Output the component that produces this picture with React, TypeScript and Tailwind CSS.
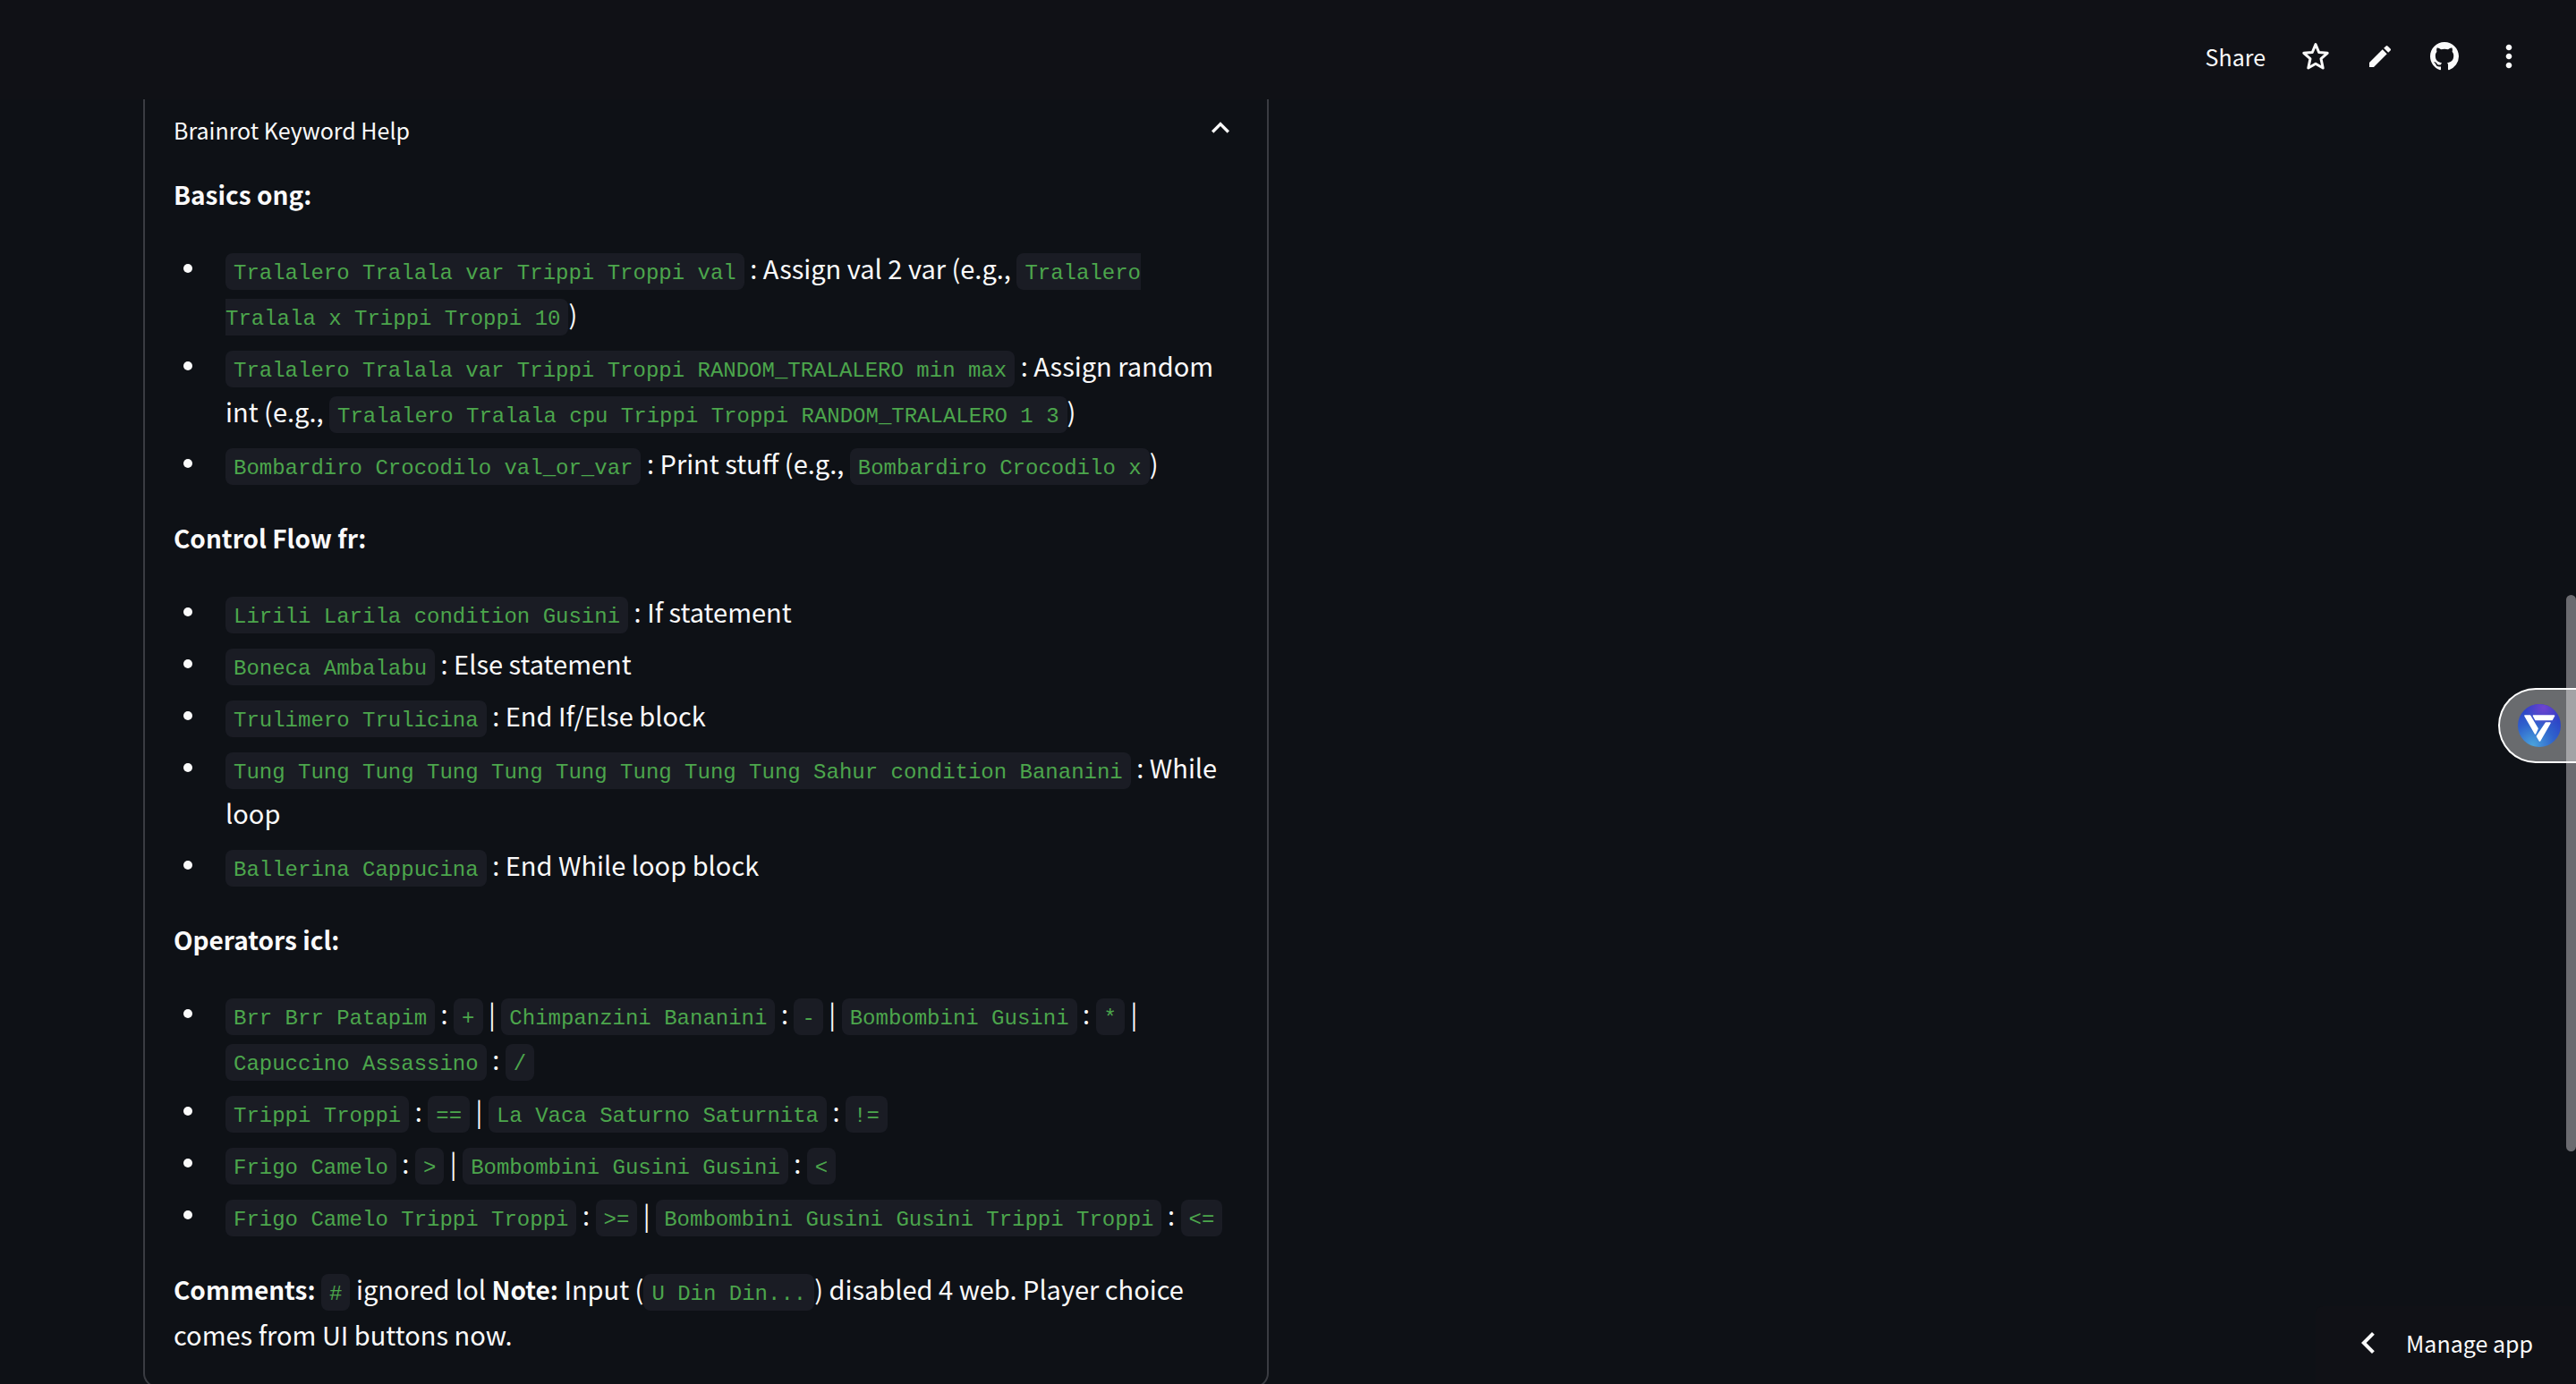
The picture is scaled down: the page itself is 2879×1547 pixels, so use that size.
import React from "react";
import { BsGithub } from "react-icons/bs";
import {
  MdChevronLeft,
  MdEdit,
  MdExpandLess,
  MdMoreVert,
} from "react-icons/md";

type ChildrenProps = {
  children: React.ReactNode;
};

function Code({ children }: ChildrenProps) {
  return (
    <code className="rounded-lg bg-[#1a1c24] px-[9px] pt-[9px] pb-[5px] font-['Liberation_Mono',monospace] text-[24px] leading-none text-[#4ca64c]">
      {children}
    </code>
  );
}

function Strong({ children }: ChildrenProps) {
  return <strong className="text-[28px] leading-none">{children}</strong>;
}

function Section({ title, children }: ChildrenProps & { title: string }) {
  return (
    <>
      <p>
        <Strong>{title}</Strong>
      </p>
      <ul className="flex flex-col gap-[7px] pl-[58px]">{children}</ul>
    </>
  );
}

function Item({ children }: ChildrenProps) {
  return (
    <li className="relative before:absolute before:-left-[47px] before:top-[21px] before:size-[10px] before:rounded-full before:bg-[#fafafa]">
      {children}
    </li>
  );
}

function StarIcon() {
  return (
    <svg
      viewBox="0 0 32 32"
      className="size-8"
      fill="none"
      stroke="currentColor"
      strokeWidth="3"
      strokeLinejoin="round"
    >
      <path d="M16 2.600l3.700 8.900 9.500.8-7.200 6.300 2.200 10.400-8.200-4.700-8.200 4.700 2.200-10.400-7.200-6.300 9.500-.8z" />
    </svg>
  );
}

function Toolbar() {
  return (
    <header className="flex h-[111px] shrink-0 items-center justify-end bg-[#101116] pr-[55px] pt-[15px]">
      <button className="mr-9 text-[25px] leading-8">Share</button>
      <div className="flex items-center gap-8">
        <button aria-label="Favorite" className="flex size-10 items-center justify-center">
          <StarIcon />
        </button>
        <button aria-label="Edit" className="flex size-10 items-center justify-center">
          <MdEdit className="size-8" />
        </button>
        <button aria-label="View source" className="flex size-10 items-center justify-center">
          <BsGithub className="size-8" />
        </button>
        <button aria-label="More" className="flex size-10 items-center justify-center">
          <MdMoreVert className="size-10" />
        </button>
      </div>
    </header>
  );
}

function KeywordHelp() {
  return (
    <section className="rounded-b-2xl border-x-2 border-b-2 border-[#3a3c42] px-8 pb-8">
      <button className="flex w-full items-start justify-between pt-3 text-[25px] leading-[44px]">
        Brainrot Keyword Help
        <MdExpandLess className="size-10" />
      </button>
      <div className="mt-6 flex flex-col gap-8 text-[29px] leading-[51px]">
        <Section title="Basics ong:">
          <Item>
            <Code>Tralalero Tralala var Trippi Troppi val</Code> : Assign val 2
            var (e.g., <Code>Tralalero Tralala x Trippi Troppi 10</Code>)
          </Item>
          <Item>
            <Code>Tralalero Tralala var Trippi Troppi RANDOM_TRALALERO min max</Code>{" "}
            : Assign random int (e.g.,{" "}
            <Code>Tralalero Tralala cpu Trippi Troppi RANDOM_TRALALERO 1 3</Code>)
          </Item>
          <Item>
            <Code>Bombardiro Crocodilo val_or_var</Code> : Print stuff (e.g.,{" "}
            <Code>Bombardiro Crocodilo x</Code>)
          </Item>
        </Section>
        <Section title="Control Flow fr:">
          <Item>
            <Code>Lirili Larila condition Gusini</Code> : If statement
          </Item>
          <Item>
            <Code>Boneca Ambalabu</Code> : Else statement
          </Item>
          <Item>
            <Code>Trulimero Trulicina</Code> : End If/Else block
          </Item>
          <Item>
            <Code>
              Tung Tung Tung Tung Tung Tung Tung Tung Tung Sahur condition Bananini
            </Code>{" "}
            : While loop
          </Item>
          <Item>
            <Code>Ballerina Cappucina</Code> : End While loop block
          </Item>
        </Section>
        <Section title="Operators icl:">
          <Item>
            <Code>Brr Brr Patapim</Code> : <Code>+</Code> |{" "}
            <Code>Chimpanzini Bananini</Code> : <Code>-</Code> |{" "}
            <Code>Bombombini Gusini</Code> : <Code>*</Code> |{" "}
            <Code>Capuccino Assassino</Code> : <Code>/</Code>
          </Item>
          <Item>
            <Code>Trippi Troppi</Code> : <Code>==</Code> |{" "}
            <Code>La Vaca Saturno Saturnita</Code> : <Code>!=</Code>
          </Item>
          <Item>
            <Code>Frigo Camelo</Code> : <Code>&gt;</Code> |{" "}
            <Code>Bombombini Gusini Gusini</Code> : <Code>&lt;</Code>
          </Item>
          <Item>
            <Code>Frigo Camelo Trippi Troppi</Code> : <Code>&gt;=</Code> |{" "}
            <Code>Bombombini Gusini Gusini Trippi Troppi</Code> :{" "}
            <Code>&lt;=</Code>
          </Item>
        </Section>
        <p>
          <Strong>Comments:</Strong> <Code>#</Code> ignored lol{" "}
          <Strong>Note:</Strong> Input (<Code>U Din Din...</Code>) disabled 4
          web. Player choice comes from UI buttons now.
        </p>
      </div>
    </section>
  );
}

function ExtensionTab() {
  return (
    <button
      aria-label="Open assistant"
      className="absolute right-0 top-[769px] flex h-[84px] w-[87px] items-center rounded-l-full border-2 border-r-0 border-white bg-white/38 pl-5"
    >
      <svg viewBox="0 0 48 48" className="size-12">
        <defs>
          <radialGradient id="orb" cx="0.35" cy="0.95" r="1">
            <stop offset="0" stopColor="#4aa3dc" />
            <stop offset="0.5" stopColor="#2f62cc" />
            <stop offset="1" stopColor="#2c35c4" />
          </radialGradient>
          <radialGradient id="glow" cx="0.6" cy="0.08" r="0.45">
            <stop offset="0" stopColor="#7044d0" />
            <stop offset="1" stopColor="#7044d0" stopOpacity="0" />
          </radialGradient>
        </defs>
        <circle cx="24" cy="24" r="24" fill="url(#orb)" />
        <circle cx="24" cy="24" r="24" fill="url(#glow)" />
        <g fill="#fff" stroke="#fff" strokeWidth="1.6" strokeLinejoin="round">
          <path d="M8 13h5.500l8.500 14.500-2.500 5.500z" />
          <path d="M17.500 13H40.500l-2.500 4.500H20z" />
          <path d="M31.500 21H36L24.500 41l-3-5z" />
        </g>
      </svg>
    </button>
  );
}

export default function App() {
  return (
    <div className="relative flex h-screen flex-col overflow-hidden bg-[#0e1116] font-['Noto_Sans_CJK_SC',sans-serif] text-[#fafafa]">
      <Toolbar />
      <main className="mr-[11px] grid grid-cols-2 items-start gap-8 px-40">
        <KeywordHelp />
      </main>
      {/* page scrollbar thumb */}
      <div className="absolute right-0 top-[665px] h-[622px] w-[11px] rounded-full bg-[#6b6b70]" />
      <ExtensionTab />
      <button className="absolute bottom-0 right-0 flex h-[87px] items-center gap-[18px] rounded-tl-lg bg-[#101116] pb-[5px] pl-[35px] pr-12 text-[25px] leading-8">
        <MdChevronLeft className="size-12" />
        Manage app
      </button>
    </div>
  );
}
